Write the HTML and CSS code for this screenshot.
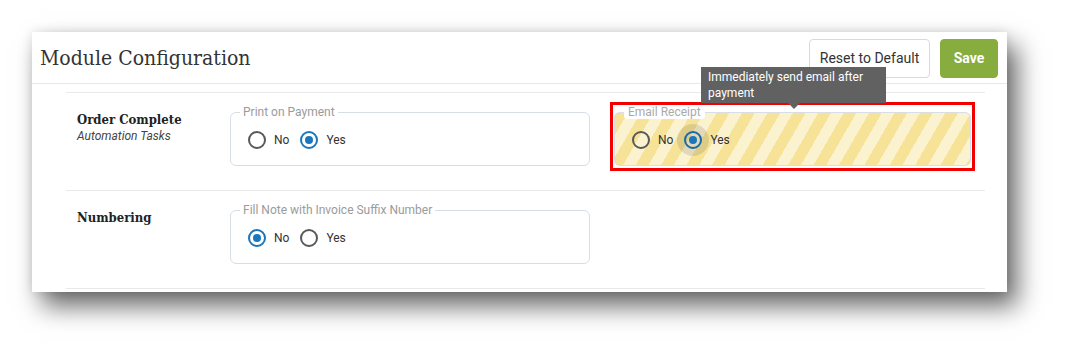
FILE: index.html
```html
<!DOCTYPE html>
<html lang="en">

<head>
  <meta charset="UTF-8" />
  <meta name="viewport" content="width=device-width, initial-scale=1.0" />
  <title>Module Configuration</title>
  <link rel="stylesheet" href="styles.css">
</head>

<body>
  <div class="page">
    <div class="card">
      <div class="card-header">
        <h1>Module Configuration</h1>
        <div class="actions">
          <button class="btn btn-default">Reset to Default</button>
          <button class="btn btn-save">Save</button>
        </div>
      </div>

      <div class="rows">
        <div class="row">
          <div class="row-label">
            <h3>Order Complete</h3>
            <em>Automation Tasks</em>
          </div>
          <fieldset class="field">
            <legend>Print on Payment</legend>
            <div class="options">
              <label class="option"><span class="radio"></span>No</label>
              <label class="option"><span class="radio checked"></span>Yes</label>
            </div>
          </fieldset>
          <div class="field-wrap">
            <fieldset class="field striped">
              <legend>Email Receipt</legend>
              <div class="options">
                <label class="option"><span class="radio"></span>No</label>
                <label class="option"><span class="radio checked focused"></span>Yes</label>
              </div>
            </fieldset>
            <!-- highlight box and tooltip sit over the field -->
            <div class="highlight"></div>
            <div class="tooltip">Immediately send email after payment</div>
          </div>
        </div>

        <div class="row">
          <div class="row-label">
            <h3>Numbering</h3>
          </div>
          <fieldset class="field">
            <legend>Fill Note with Invoice Suffix Number</legend>
            <div class="options">
              <label class="option"><span class="radio checked"></span>No</label>
              <label class="option"><span class="radio"></span>Yes</label>
            </div>
          </fieldset>
        </div>
      </div>
    </div>
  </div>
</body>

</html>
```

FILE: styles.css
```css
body {
  margin: 0;
  min-height: 357px;
  background: #fff;
  font-family: Roboto, 'Liberation Sans', sans-serif;
  color: #333;
}

.page {
  padding: 32px 0 0 32px;
}

.card {
  width: 975px;
  height: 260px;
  box-sizing: border-box;
  background: #fff;
  box-shadow: 10px 14px 24px rgba(0, 0, 0, 0.6), 0 0 10px rgba(0, 0, 0, 0.1);
}

.card-header {
  height: 52px;
  box-sizing: border-box;
  display: flex;
  align-items: center;
  justify-content: space-between;
  padding: 0 9px 0 8px;
  border-bottom: 1px solid #e8e8e8;
}

.card-header h1 {
  margin: 0;
  font-family: 'DejaVu Serif Condensed', 'DejaVu Serif', serif;
  font-weight: normal;
  font-size: 21px;
  color: #333;
  padding-top: 1px;
}

.actions {
  display: flex;
  gap: 10px;
  margin-top: 1px;
}

.btn {
  height: 39px;
  border-radius: 4px;
  font-family: Roboto, sans-serif;
  font-size: 14px;
  cursor: pointer;
}

.btn-default {
  width: 121px;
  background: #fff;
  border: 1px solid #d9d9d9;
  color: #333;
}

.btn-save {
  width: 58px;
  background: #86ad3e;
  border: 1px solid #86ad3e;
  color: #fff;
  font-weight: bold;
}

.rows {
  margin: 8px 22px 0 34px;
  border-bottom: 1px solid #e9e9e9;
}

.row {
  height: 98px;
  box-sizing: border-box;
  border-top: 1px solid #e9e9e9;
  display: flex;
  align-items: flex-start;
  padding: 12px 0 0 11px;
}

.row-label {
  width: 153px;
  margin-top: 7px;
}

.row-label h3 {
  margin: 0;
  font-family: 'DejaVu Serif Condensed', 'DejaVu Serif', serif;
  font-size: 13px;
  font-weight: bold;
  color: #222;
  line-height: 16px;
}

.row-label em {
  display: block;
  font-size: 12px;
  color: #444;
  line-height: 16px;
}

.field {
  width: 360px;
  box-sizing: border-box;
  margin: 0;
  padding: 9px 10px 13px 17px;
  border: 1px solid #d8dee6;
  border-radius: 6px;
}

.field legend {
  margin-left: -8px;
  padding: 0 3px;
  font-size: 12px;
  line-height: 14px;
  color: #9b9b9b;
}

.field-wrap {
  position: relative;
  margin-left: 24px;
}

.field.striped {
  width: 357px;
  background: repeating-linear-gradient(120deg, #f6e398 0 11px, #fbf2cf 11px 22px);
}

.field.striped legend {
  background: #fff;
  border-radius: 3px;
  padding: 0 4px;
  color: #aaa;
}

.options {
  display: flex;
  align-items: center;
  gap: 11px;
}

.option {
  display: flex;
  align-items: center;
  gap: 8px;
  font-size: 12px;
  color: #333;
  height: 24px;
}

.radio {
  position: relative;
  width: 18px;
  height: 18px;
  box-sizing: border-box;
  border: 2px solid #595959;
  border-radius: 50%;
}

.radio.checked {
  border-color: #1b76bb;
}

.radio.checked::after {
  content: '';
  position: absolute;
  left: 3px;
  top: 3px;
  width: 8px;
  height: 8px;
  border-radius: 50%;
  background: #1b76bb;
}

/* focus ripple around the selected radio */
.radio.focused::before {
  content: '';
  position: absolute;
  left: -9px;
  top: -9px;
  width: 32px;
  height: 32px;
  border-radius: 50%;
  background: rgba(0, 0, 0, 0.1);
}

.highlight {
  position: absolute;
  top: -3px;
  left: -4px;
  right: -4px;
  bottom: -5px;
  border: 3px solid #f20000;
  pointer-events: none;
}

.tooltip {
  position: absolute;
  left: 87px;
  top: -38px;
  width: 185px;
  box-sizing: border-box;
  padding: 2px 8px 2px 7px;
  background: #616161;
  color: #fff;
  font-size: 12px;
  line-height: 16px;
}

.tooltip::after {
  content: '';
  position: absolute;
  left: 87px;
  bottom: -6px;
  border-left: 6px solid transparent;
  border-right: 6px solid transparent;
  border-top: 6px solid #616161;
}
```
